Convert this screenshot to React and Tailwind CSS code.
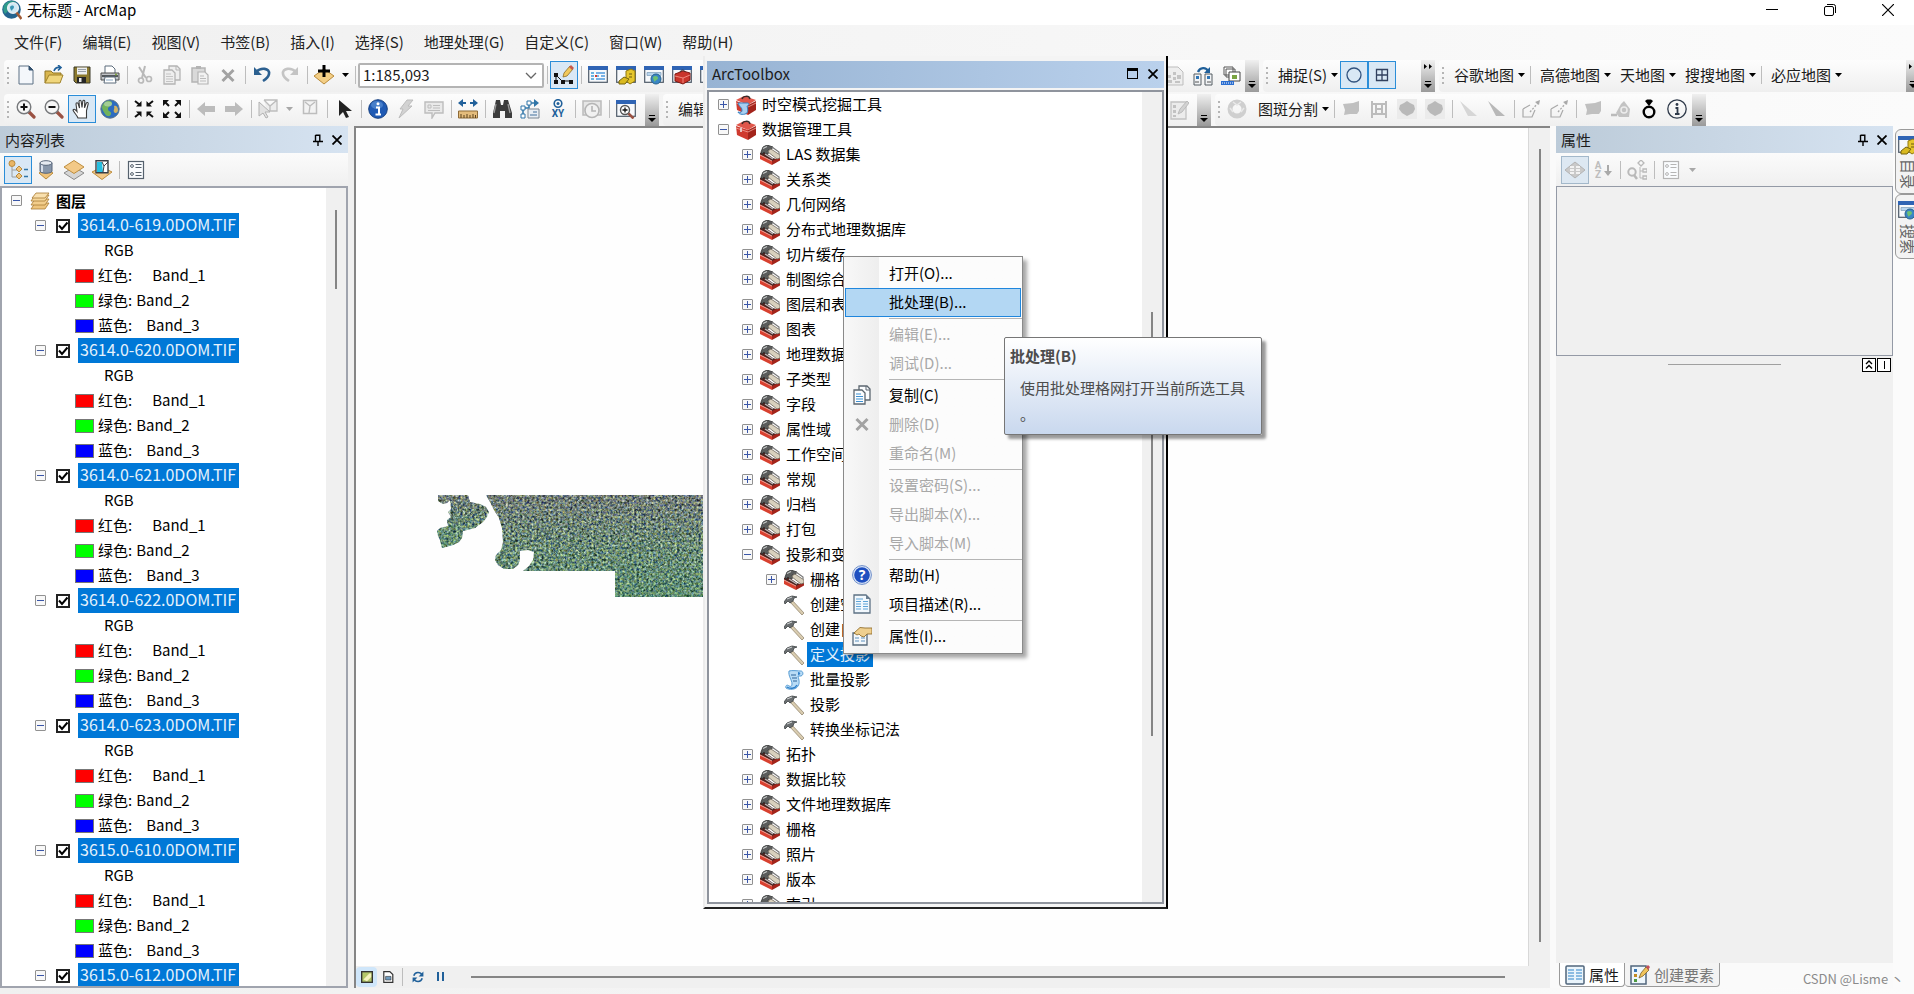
import React from "react";

/* ---------- icons ---------- */
const S = ({ children, className = "size-5" }) => (
  <svg viewBox="0 0 20 20" className={`${className} shrink-0`} fill="none" aria-hidden="true">{children}</svg>
);

const NewDoc = () => (
  <S><path d="M3 1h10l4 4v14H3z" fill="#f4f7fb" stroke="#5d7184" /><path d="M13 1v4h4z" fill="#33506e" stroke="#33506e" /></S>
);
const OpenIcon = () => (
  <S>
    <path d="M1 18V6h6l2 2h8v3" fill="#d9b64f" stroke="#8f7423" />
    <path d="M1 18l4-8h14l-3 8z" fill="#f0d67c" stroke="#a08228" />
    <path d="M10 6c1-3 3-4 6-3.500M14 0l3 2.500-3 3" stroke="#20609a" strokeWidth="1.600" />
  </S>
);
const SaveIcon = () => (
  <S>
    <path d="M2 2h16v16H4l-2-2z" fill="#8c7a2e" stroke="#3d3a28" />
    <rect x="5" y="2.500" width="10" height="7" fill="#eceef0" /><path d="M6 4.500h8M6 6.500h8" stroke="#9aa1a8" />
    <rect x="5" y="12" width="9" height="6" fill="#262626" /><rect x="7" y="13" width="2.500" height="4" fill="#e8e8e8" />
  </S>
);
const PrintIcon = () => (
  <S>
    <path d="M5 8V1h7l3 3v4" fill="#fff" stroke="#5d6d7c" />
    <path d="M1 8h18v7H1z" fill="#c2c5c9" stroke="#4c4c4c" /><path d="M2 11h16" stroke="#54585c" strokeWidth="2" />
    <path d="M5 12h10l1 6H4z" fill="#fff" stroke="#5d6d7c" /><path d="M6 15h7" stroke="#8aaac6" /><circle cx="16" cy="9.500" r="1" fill="#7da33c" />
  </S>
);
const CutIcon = () => (
  <S><path d="M5 2l7 11M11 1L8 13" stroke="#b9b9b9" strokeWidth="2" /><circle cx="7" cy="15.500" r="2.500" stroke="#b9b9b9" strokeWidth="1.700" /><circle cx="15" cy="14" r="2.500" stroke="#b9b9b9" strokeWidth="1.700" /></S>
);
const CopyShape = ({ line = "#b4b4b4", text = "#c4c4c4", page = "#eeeeee" }) => (
  <S>
    <path d="M7 1h8l3 3v11H7z" fill={page} stroke={line} strokeWidth="1.300" /><path d="M14 1v4h4" stroke={line} />
    <path d="M2 5h8l3 3v11H2z" fill={page} stroke={line} strokeWidth="1.300" />
    <path d="M4 9h5M4 11.500h7M4 14h7M4 16.500h7" stroke={text} strokeWidth="1.200" />
  </S>
);
const PasteIcon = () => (
  <S>
    <path d="M2 3h13v14H2z" fill="#d9d9d9" stroke="#b4b4b4" strokeWidth="1.500" /><path d="M6 1h5v3H6z" fill="#b4b4b4" />
    <path d="M8 7h7l3 3v9H8z" fill="#f2f2f2" stroke="#b4b4b4" strokeWidth="1.200" /><path d="M10 11h4M10 13.500h6M10 16h6" stroke="#bbb" />
  </S>
);
const XGray = () => <S><path d="M4.500 5l11 11M15.500 5l-11 11" stroke="#a2a2a2" strokeWidth="3" /></S>;
const UndoIcon = () => (
  <S><path d="M4 7c5-5 14-4 13 2-.500 3-3 5-6 7" stroke="#2c6090" strokeWidth="2.600" /><path d="M2 2v8h8z" fill="#2c6090" /></S>
);
const RedoIcon = () => (
  <S><path d="M16 7C11 2 2 3 3 9c.500 3 3 5 6 7" stroke="#c4c4c4" strokeWidth="2.600" /><path d="M18 2v8h-8z" fill="#c4c4c4" /></S>
);
const AddData = () => (
  <S><path d="M0 11l10-7 10 7-10 8z" fill="#f3ce85" stroke="#b98a3a" /><path d="M10 0v12M4 6h12" stroke="#000" strokeWidth="3" /></S>
);
const EditorIcon = () => (
  <S>
    <path d="M2 10l6 6h8M2 10v6" stroke="#111" /><path d="M0 8h4v4H0zM0 15h4v4H0zM7 15h4v4H7zM15 15h4v4h-4z" fill="#111" />
    <path d="M9 12l1-4 6-7 3 3-6 7z" fill="#f2c95c" stroke="#8a6b24" strokeWidth=".800" /><path d="M15 2l2-2 3 3-2 2z" fill="#c85a4a" />
  </S>
);
const Win = ({ children }) => (
  <S><rect x=".700" y="1.700" width="18.600" height="15.600" fill="#f7f9fc" stroke="#4e5a68" strokeWidth="1.200" /><path d="M0 1h20v4H0z" fill="#2f64b4" />{children}</S>
);
const TableWin = () => (
  <Win><path d="M3 8h3M3 11h3M3 14h3" stroke="#3e9bd6" strokeWidth="1.500" /><path d="M8 8h9M8 11h3M13 11h4M8 14h9" stroke="#4f9bdd" strokeWidth="1.500" /><path d="M7 10h2v2H7z" fill="#d23b30" /></Win>
);
const CatalogWin = () => (
  <Win><path d="M10 6l5-2 4 2v10l-5 3-4-3z" fill="#e6c62c" stroke="#8f7711" /><path d="M3 16l5-4 5 2-4 5H3z" fill="#d9b91f" stroke="#77650e" /><path d="M13 9h3M13 12h3" stroke="#6b5a10" /></Win>
);
const SearchWin = () => (
  <Win><path d="M3 7.500h14v3H3z" fill="#b8d5ee" stroke="#7d9cb8" strokeWidth=".700" /><circle cx="12" cy="14" r="5" fill="#3a86c4" stroke="#26628f" /><path d="M9 12c2-2 5-1 5 1s-3 2-3 4c-1-1-2-3-2-5z" fill="#6ec172" /></Win>
);
const ToolWin = () => (
  <Win><path d="M3 9l8-3 7 2v7l-7 4-8-3z" fill="#c9352b" stroke="#7e1912" /><path d="M3 11l8 2 7-3M11 13v5" stroke="#f08a7e" /><path d="M8 7c1-3 5-2 5 0" stroke="#333" /></Win>
);
const GrayGrid = () => <S><path d="M1 1h12l5 5v13H1z" fill="#eee" stroke="#bdbdbd" /><path d="M3 9h3v3H3zM8 6h3v3H8zM8 11h3v3H8zM12 9h4v4h-4zM3 14h4v3H3zM10 15h5v2h-5z" fill="#c4c4c4" /></S>;
const ServerSwap = () => (
  <S>
    <path d="M1 8h7v11H1zM12 8h7v11h-7z" fill="#f1f3f5" stroke="#555c63" /><path d="M3 10h3v3H3zM14 10h3v3h-3z" fill="#2f75b5" /><path d="M2 16h4M14 16h4" stroke="#555" />
    <path d="M5 6c2-5 8-5 10-1" stroke="#20609a" strokeWidth="2.400" /><path d="M17 1v6h-6z" fill="#20609a" />
  </S>
);
const LayersStack = () => (
  <S>
    <path d="M3 1h9v8H3zM5 3h9v8H5z" fill="#fff" stroke="#555" /><path d="M8 6h11v9H8z" fill="#fff" stroke="#444" /><path d="M11 9h5v4h-5z" fill="#7aa442" />
    <path d="M0 15h13v4H0z" fill="#2c6fd1" /><path d="M1 17h11" stroke="#fff" strokeDasharray="1 1" />
  </S>
);
const SnapCircle = () => <S><circle cx="10" cy="10" r="7" stroke="#31527e" strokeWidth="1.300" /></S>;
const SnapGrid = () => <S><path d="M4.500 4.500h11v11h-11zM10 4.500v11M4.500 10h11" stroke="#31405e" strokeWidth="1.300" /></S>;

const Mag = ({ minus }) => (
  <S>
    <path d="M13 13l5 5" stroke="#9a5142" strokeWidth="3.200" strokeLinecap="round" />
    <circle cx="8" cy="8" r="6.800" fill="#f6f6f6" stroke="#77797c" strokeWidth="1.400" /><path d="M4.500 8h7" stroke="#111" strokeWidth="2" />
    {!minus && <path d="M8 4.500v7" stroke="#111" strokeWidth="2" />}
  </S>
);
const Hand = () => (
  <S>
    <path d="M6 19c-1-3-4-5-5-8 1-1.500 2.500-.500 4 1.500L4 5c0-1.600 1.800-1.800 2.200-.200L7.500 9 7 2.500C7.200.900 9 .900 9.200 2.500L10 8.500l.800-6.300c.400-1.500 2-1.200 2 .300l-.300 6.300 1.700-4.600c.700-1.300 2.300-.700 2 .700l-1.700 6.600V19z" fill="#fff" stroke="#3c3c3c" strokeWidth="1.100" />
  </S>
);
const Globe = ({ className }) => (
  <S className={className}>
    <circle cx="10" cy="10" r="9.200" fill="#2c6cc0" stroke="#5e7687" /><path d="M4 4c4-4 9-2 8 1s-4 2-4 5 4 2 3 5-4 3-6 0-5-7-1-11z" fill="#72b25c" />
    <path d="M14 7c2-1 4 1 4 4s-3 4-4 2 1-3 0-6z" fill="#d2b465" /><ellipse cx="8" cy="5" rx="4" ry="2.500" fill="#fff" opacity=".35" />
  </S>
);
const ArrowsIn = () => (
  <S><path d="M1 2l5 4M19 2l-5 4M1 18l5-4M19 18l-5-4" stroke="#111" strokeWidth="2" /><path d="M7.500 2v5.500H2zM12.500 2v5.500H18zM7.500 18v-5.500H2zM12.500 18v-5.500H18z" fill="#111" /></S>
);
const ArrowsOut = () => (
  <S><path d="M2 2l5 5M18 2l-5 5M2 18l5-5M18 18l-5-5" stroke="#111" strokeWidth="2" /><path d="M1 7V1h6zM19 7V1h-6zM1 13v6h6zM19 13v6h-6z" fill="#111" /></S>
);
const NavArrow = ({ right }) => (
  <S><path d={right ? "M19 10l-8-7v4H1v6h10v4z" : "M1 10l8-7v4h10v6H9v4z"} fill="#bcbcbc" /></S>
);
const SelectFeat = () => <S><path d="M6 1h13v11H9M6 1l6 6 7-6M12 7v5" fill="#ededed" stroke="#bdbdbd" strokeWidth="1.300" /><path d="M1 3v14l4-3 3 5 2-1-3-5h5z" fill="#e2e2e2" stroke="#b2b2b2" /></S>;
const ClearSel = () => <S><rect x="3.500" y="1.500" width="13" height="13" fill="#f3f3f3" stroke="#bdbdbd" strokeWidth="1.500" /><path d="M5 3l5 4-1 7M10 7l5-4" stroke="#bdbdbd" strokeWidth="1.400" /></S>;
const Pointer = () => <S><path d="M5 1v16l4-4 3 6 3-1-3-6h6z" fill="#222" /></S>;
const Identify = () => (
  <S><circle cx="10" cy="10" r="9.300" fill="#1f5ab4" stroke="#174080" /><ellipse cx="9" cy="6" rx="6" ry="4" fill="#6ea2e0" opacity=".5" /><circle cx="10" cy="4.800" r="1.500" fill="#fff" /><path d="M8 8.500h3v7M7.500 15.500h5.500" stroke="#fff" strokeWidth="2" /></S>
);
const Bolt = () => <S><path d="M11 1h6l-5 6h4L3 19l4-9H4z" fill="#d2d2d2" stroke="#bcbcbc" /></S>;
const Popup = () => <S><path d="M1 3h18v11h-8l-3 5v-5H1z" fill="#e9e9e9" stroke="#bdbdbd" strokeWidth="1.400" /><path d="M4 6h3v3H4zM9 6.500h7M9 9h7M4 11.500h12" stroke="#bdbdbd" /></S>;
const Measure = () => (
  <S><path d="M0 4l5-4v8zM20 4l-5-4v8z" fill="#20609a" /><path d="M3 4h5M12 4h5" stroke="#20609a" strokeWidth="2" /><path d="M.500 12h19v7H.500z" fill="#e4bc7c" stroke="#8d6a37" /><path d="M3 19v-4M6 19v-3M9 19v-4M12 19v-3M15 19v-4M17.500 19v-3" stroke="#5d431d" /></S>
);
const Binoculars = () => (
  <S><path d="M4 1h4l1 5h2l1-5h4l4 13v5h-7v-7h-5v7H1v-5z" fill="#3c3c3c" /><path d="M4 5L2 14M16 5l2 9" stroke="#9a9a9a" strokeWidth="1.300" /></S>
);
const RouteFind = () => (
  <S><path d="M3 16V9h6V4h6" stroke="#2f75a8" strokeWidth="1.500" /><path d="M14 0l5 4-5 4z" fill="#2f75a8" /><path d="M1 7h4v4H1zM1 15h4v4H1zM7 2h4v4H7z" fill="#fff" stroke="#2f75a8" /><path d="M8 10h11v9H8z" fill="#e8eef4" stroke="#7a8793" /><path d="M13 13h4M10 16h7" stroke="#7a9bb9" strokeWidth="1.300" /></S>
);
const GoXY = () => (
  <S><circle cx="10" cy="4.500" r="3.800" stroke="#20609a" strokeWidth="1.600" /><circle cx="10" cy="4.500" r="1.500" fill="#20609a" /><text x="10" y="18" textAnchor="middle" fontSize="10" fontWeight="700" fill="#20609a" fontFamily="Roboto, sans-serif">XY</text></S>
);
const TimeIcon = () => <S><path d="M1 2h18v14H1z" fill="#e6e6e6" stroke="#bbb" strokeWidth="1.500" /><circle cx="10" cy="11.500" r="7" fill="#f1f1f1" stroke="#b5b5b5" strokeWidth="1.600" /><path d="M10 7v5h4" stroke="#b5b5b5" strokeWidth="1.600" /></S>;
const ViewerWin = () => <Win><circle cx="9" cy="11" r="4.500" fill="#fff" stroke="#555" strokeWidth="1.400" /><path d="M6.500 11h5M9 8.500v5" stroke="#111" strokeWidth="1.300" /><path d="M12.500 14.500l5 5" stroke="#9a5142" strokeWidth="2.500" /></Win>;
const FormEdit = () => <S><path d="M2 2h15v17H2z" fill="#ececec" stroke="#c2c2c2" strokeWidth="1.300" /><path d="M4 5h3v3H4zM4 10h3v3H4zM4 15h3v2H4z" fill="#c2c2c2" /><path d="M9 14l2-5 7-8 2 2-7 9z" fill="#d2d2d2" stroke="#bbb" /></S>;
const Ring = () => <S><circle cx="10" cy="10" r="7" stroke="#cfcfcf" strokeWidth="5" /><path d="M6 3l4 3 4-3M17 9l-3 4M3 9l3 4" stroke="#e9e9e9" strokeWidth="1.500" /></S>;
const GrayBlob = () => <S><path d="M2 5l10-1 6-2v10l-2 3-7 0-6 1 1-5z" fill="#c0c0c0" /></S>;
const Frame = () => <S><path d="M3 2v17M17 2v17M3 5h14M3 15h14M7 6v9M13 6v9M7 10h6" stroke="#bcbcbc" strokeWidth="2" /></S>;
const Octagon = () => <S><path d="M0 0h20v20H0z" fill="#ebebeb" /><path d="M7 4l3-2 3 2 4 2 1 4-2 4-6 3-5-3-3-4 1-4z" fill="#b9b9b9" /></S>;
const Tri = ({ dark }) => <S><path d="M1 2l17 15H9z" fill={dark ? "#b8b8b8" : "#d6d6d6"} /></S>;
const PenPoly = () => <S><path d="M2 10l7-4M2 10v8h9l3-7" stroke="#a9a9a9" strokeWidth="1.200" /><path d="M9 13l8-9" stroke="#a9a9a9" strokeDasharray="2 1.500" strokeWidth="1.300" /><path d="M19 1l-1 5-4-3z" fill="#a9a9a9" /></S>;
const Rotate = () => <S><path d="M0 16h6" stroke="#bbb" strokeWidth="2.500" /><path d="M13 2l6 8-1 8H8l-3-4 5-9z" fill="#c3c3c3" /><circle cx="13" cy="11" r="3" stroke="#ececec" strokeWidth="1.500" /></S>;
const DiamondRing = () => <S><circle cx="10" cy="13" r="5.300" stroke="#000" strokeWidth="2.400" /><path d="M6 2l2-1.500h4L14 2l-4 5z" fill="#000" /></S>;
const InfoRing = () => <S><circle cx="10" cy="10" r="9.200" stroke="#2f3a4a" strokeWidth="1.300" /><circle cx="10" cy="5.500" r="1.400" fill="#2f3a4a" /><path d="M8.500 9h2v6M8 15h4.500" stroke="#2f3a4a" strokeWidth="1.800" /></S>;

/* contents panel */
const ListOrder = () => (
  <S><path d="M4 7v10h5M4 10h7" stroke="#9c9c9c" /><circle cx="4" cy="3.500" r="3" fill="#e9b666" stroke="#b98a3a" /><path d="M8 9l3-3 3 3-3 3zM8 16l3-3 3 3-3 3z" fill="#f0c37a" stroke="#b98a3a" /><path d="M16 9.500h4M16 16.500h4" stroke="#2f75a8" strokeWidth="1.500" /></S>
);
const ListSource = () => (
  <S><path d="M3 13l7-4 7 4-7 6z" fill="#f0c37a" stroke="#b98a3a" /><path d="M4 3v8c0 3 12 3 12 0V3z" fill="#8796aa" stroke="#56657a" /><path d="M6 4v8" stroke="#d6deea" strokeWidth="2" /><ellipse cx="10" cy="3" rx="6" ry="2.300" fill="#e5eaf1" stroke="#56657a" /></S>
);
const ListVisible = () => <S><path d="M0 13l10-6 10 6-10 6.500z" fill="#d5d5d5" stroke="#8b8b8b" /><path d="M0 7l10-6.500L20 7l-10 6.500z" fill="#f3c987" stroke="#bd8d3d" /></S>;
const ListSelect = () => <S><path d="M0 12l10-5 10 5-10 7.500z" fill="#f3c987" stroke="#bd8d3d" /><path d="M4 .700h12v12H4z" fill="#fff" stroke="#3a3f46" strokeWidth="1.400" /><path d="M5 2h5l1 10H5z" fill="#27bfe0" /><path d="M10 2l2 4 4-4M12 6l-1 6" stroke="#3a3f46" /></S>;
const Options = ({ c = "#55616d" }) => (
  <S><rect x="2.500" y="1.500" width="15" height="17" fill="#fafcfe" stroke={c} strokeWidth="1.200" /><circle cx="6" cy="6" r="1.400" stroke={c} /><circle cx="6" cy="14" r="1.400" stroke={c} /><path d="M9.500 4.500h6M9.500 7.500h6M9.500 12.500h6M9.500 15.500h6" stroke={c} /></S>
);
const LayerStack = () => (
  <S><path d="M1 18l4-6h14l-4 6z" fill="#eec57e" stroke="#a87b36" strokeWidth=".800" /><path d="M1 14l4-6h14l-4 6z" fill="#f2cd8c" stroke="#a87b36" strokeWidth=".800" /><path d="M1 10l4-6h14l-4 6z" fill="#f6d79b" stroke="#a87b36" strokeWidth=".800" /><path d="M2 7l4-5h13l-4 5z" fill="#f9e0ae" stroke="#a87b36" strokeWidth=".800" /></S>
);

/* toolbox tree */
const Toolbox = ({ script }) => (
  <S>
    <path d="M0 6l12 4v10L1 15z" fill="#cf3a2f" /><path d="M12 10l8-4v9l-8 5z" fill="#a3241b" /><path d="M0 5l8-4 12 4-8 5z" fill="#e0564a" />
    <path d="M6 4c1-3 7-4 8 0" stroke="#3a2a28" strokeWidth="1.500" /><path d="M0 8l12 4 8-4" stroke="#f2a59c" strokeWidth=".800" /><path d="M5 8v4M6 10" stroke="#eee" strokeWidth="1.500" />
    {script && <path d="M2 8h10c2 1 0 3-1 3 1 3 1 5 0 7-2 2-8 2-9-1 3 1 4 0 4-2 0-3-3-3-4-7z" fill="#a8cff0" stroke="#3a83c2" />}
  </S>
);
const Toolset = () => (
  <S>
    <path d="M0 8l3-2 10 7 6 2-6 4L0 12z" fill="#4a2320" />
    <path d="M0 9.500l12 6.500v4L0 14z" fill="#d8402f" /><path d="M12 16l8-4v3.500L12 20z" fill="#a3241b" /><path d="M0 10l12 6" stroke="#f3b0a6" strokeWidth=".900" />
    <path d="M1 7l2-5 4-2 6 2-2 3-3 0 1 3-3 1-2-2-2 2z" fill="#5a5c5c" stroke="#303232" strokeWidth=".800" />
    <path d="M3 3.500l4-2" stroke="#c9cccc" strokeWidth="1.200" /><path d="M9 5l2-1 9 6v3l-3 1-9-7z" fill="#d9d1be" stroke="#6e675a" strokeWidth=".800" />
    <path d="M5 9l8 5" stroke="#bababa" strokeWidth="1.400" /><path d="M12 2l7 5v2" stroke="#777" strokeWidth="1.200" />
  </S>
);
const Hammer = () => (
  <S>
    <path d="M8 5l12 13-2 2L6 7z" fill="#d9ccb0" stroke="#8a7d64" strokeWidth=".700" />
    <path d="M0 7l3-4 5-2 5 1-3 1-1 3-3 2-2-2-3 3z" fill="#6a6e70" stroke="#3d4244" strokeWidth=".800" /><path d="M3 4l5-2" stroke="#d3d6d8" />
  </S>
);
const ScriptIcon = () => (
  <S>
    <path d="M5 1c3-1 9 0 12 0 2 0 3 4 0 5h-3c1 4 2 7 0 10-2 4-9 4-12 2-1-2 1-4 3-2 2 1 3 0 3-2 0-4-4-8-3-13z" fill="#b9dcf6" stroke="#4a94cf" strokeWidth=".900" />
    <path d="M7 5h5M8 8h5M9 11h4" stroke="#2d659a" /><path d="M14 2c3 0 3 3 0 3" fill="#2d7fca" /><path d="M3 17c3 2 8 2 10-2" stroke="#2d7fca" strokeWidth="1.500" />
  </S>
);
const HelpIcon = () => (
  <S><circle cx="10" cy="10" r="9.400" fill="#dfe8f7" stroke="#6a8bc8" /><circle cx="10" cy="10" r="7.800" fill="#1e4fc0" /><text x="10" y="15" textAnchor="middle" fontSize="14" fontWeight="700" fill="#fff" fontFamily="Open Sans, sans-serif">?</text></S>
);
const DocIcon = () => <S><path d="M2 1h12l4 4v14H2z" fill="#f2f8fd" stroke="#5d7184" strokeWidth="1.300" /><path d="M14 1v4h4z" fill="#6b7f92" /><path d="M4 5h7M4 7.500h5M4 10h5M4 12.500h5M4 15h5M11 7.500h5M11 10h5M11 12.500h5M11 15h5" stroke="#5ea4d8" /></S>;
const PropHand = () => <S><path d="M1 7h14v12H1z" fill="#f4f8fb" stroke="#56697b" strokeWidth="1.300" /><path d="M3 12h4M9 12h4M3 15h4M9 15h4" stroke="#8fb2d2" strokeWidth="1.500" /><path d="M2 7l6-5.500 5 .5h7v6h-5l-3 3-3-1-2-2-2 1z" fill="#efcf8e" stroke="#93702f" strokeWidth=".900" /></S>;
const ArcMapLogo = () => (
  <S>
    <circle cx="9.500" cy="9.500" r="9.300" fill="#23638f" /><path d="M2 5c3-4 8-5 12-3L9 8l-6 6C1 11 1 8 2 5z" fill="#2f9a8b" /><circle cx="11" cy="8" r="5.300" fill="#cfe8f5" stroke="#e8eef2" strokeWidth="1.600" />
    <path d="M8 7c1-2 4-2 4 0s-2 2-2 4c-1-1-2-2-2-4z" fill="#3b95b4" /><path d="M14.500 12.500l5 6.500" stroke="#a05a35" strokeWidth="2.600" />
  </S>
);
const CategoryIcon = () => <S><path d="M0 10l10-8 10 8-10 8z" fill="#c9c9c9" stroke="#b2b2b2" /><path d="M5 7h4M5 10h4M5 13h4M11 7h4M11 10h4M11 13h4" stroke="#fff" strokeWidth="1.400" /></S>;
const SortAZ = () => <S><text x="5" y="9" textAnchor="middle" fontSize="10" fontWeight="700" fill="#bdbdbd" fontFamily="Roboto, sans-serif">A</text><text x="5" y="18" textAnchor="middle" fontSize="10" fontWeight="700" fill="#bdbdbd" fontFamily="Roboto, sans-serif">Z</text><path d="M15 5v9" stroke="#a9a9a9" strokeWidth="2" /><path d="M11 11h8l-4 5z" fill="#a9a9a9" /></S>;
const RelateIcon = () => <S><circle cx="5" cy="12" r="3.700" stroke="#b9b9b9" strokeWidth="2" /><path d="M7 15l3 4" stroke="#b9b9b9" strokeWidth="2.500" /><path d="M11 3l3-3 3 3-3 3zM16 9h4v3h-4zM16 16h4v3h-4z" stroke="#b9b9b9" strokeWidth="1.300" /><path d="M13 7v11h3M13 11h3" stroke="#b9b9b9" /></S>;
const TabTable = () => <S><rect x="1" y="1" width="18" height="18" rx="1" fill="#eaf4fb" stroke="#50667c" strokeWidth="1.500" /><path d="M3 5h6M3 8h6M3 11h6M3 14h6M11 5h6M11 8h6M11 11h6M11 14h6" stroke="#8cbce2" strokeWidth="2" /></S>;
const TabEdit = () => <S><rect x="1" y="1" width="15" height="18" fill="#eef6fc" stroke="#50667c" strokeWidth="1.500" /><path d="M4 4h3v3H4z" fill="#3a78b5" /><path d="M4 9h3v3H4z" fill="#c38b22" /><path d="M4 14h3v3H4z" fill="#4d9a3f" /><path d="M9 13l2-5 5-6 3 3-6 6z" fill="#f0c35a" stroke="#7e6224" strokeWidth=".800" /><path d="M16 2l2-2 2 2-2 3z" fill="#c34f5a" /></S>;

/* ---------- small building blocks ---------- */
const Caret = ({ gray }) => (
  <svg viewBox="0 0 7 4" className="h-1 w-[7px] shrink-0" aria-hidden="true"><path d="M0 0h7L3.500 4z" fill={gray ? "#a8a8a8" : "#000"} /></svg>
);
const Btn = ({ label, icon, on, disabled }) => (
  <button type="button" aria-label={label} disabled={disabled}
    className={`flex h-7 w-7 shrink-0 items-center justify-center ${on ? "border border-[#2a8dd8] bg-[#d9e8f5]" : ""}`}>{icon}</button>
);
const Sep = () => <span className="ml-[3px] mr-[2px] h-[18px] w-px shrink-0 bg-[#bdbdbd]" />;
const Grip = () => (
  <span className="flex w-2 shrink-0 flex-col items-center gap-[3px]">
    {[0, 1, 2, 3].map((i) => <i key={i} className="size-[2px] bg-[#b5b5b5]" />)}
  </span>
);
const Overflow = ({ more }) => (
  <button type="button" aria-label="更多" className="ml-auto flex h-8 w-[14px] shrink-0 flex-col items-center justify-between self-start bg-linear-to-b from-[#f0f0f0] to-[#9a9a9a] pt-1 pb-[3px]">
    <svg viewBox="0 0 8 5" className="h-[5px] w-2" aria-hidden="true">{more && <path d="M0 0l3 2.500L0 5zM5 0l3 2.500L5 5z" fill="#000" />}</svg>
    <svg viewBox="0 0 8 8" className="size-2" aria-hidden="true"><path d="M1 .500h6" stroke="#000" /><path d="M0 3h8L4 7z" fill="#000" /></svg>
  </button>
);
const Bar = ({ className = "", children }) => (
  <div className={`flex h-8 shrink-0 items-center rounded-l bg-linear-to-b from-[#fdfdfd] to-[#efefef] pb-[2px] ${className}`}>{children}</div>
);
const TextBtn = ({ children }) => (
  <button type="button" className="flex h-7 shrink-0 items-center gap-1 whitespace-nowrap pr-[2px] pl-[7px]">{children}<Caret /></button>
);
const Expander = ({ open }) => (
  <button type="button" aria-label={open ? "折叠" : "展开"} className="flex size-[11px] shrink-0 items-center justify-center rounded-[1px] border border-[#919191] bg-[#f8f8f8]">
    <svg viewBox="0 0 7 7" className="size-[7px]" aria-hidden="true"><path d={open ? "M0 3.500h7" : "M0 3.500h7M3.500 0v7"} stroke="#3a56a8" /></svg>
  </button>
);
const PinIcon = () => <svg viewBox="0 0 10 12" className="h-3 w-[10px]" fill="none" aria-hidden="true"><path d="M2.500 1v6M2.500 1.200h5M6.800 1v6M0 7.500h10M5 8v4" stroke="#000" strokeWidth="1.400" /></svg>;
const CloseX = () => <svg viewBox="0 0 10 10" className="size-[10px]" fill="none" aria-hidden="true"><path d="M.500.500l9 9M9.500.500l-9 9" stroke="#000" strokeWidth="1.800" /></svg>;
const PanelHead = ({ title }) => (
  <header className="flex h-[27px] shrink-0 items-center bg-linear-to-r from-[#bccbd9] to-[#d6e3f1] pl-[5px] pr-[6px] text-[#1c1c1c]">
    <h2>{title}</h2>
    <button type="button" aria-label="自动隐藏" className="ml-auto mr-[9px]"><PinIcon /></button>
    <button type="button" aria-label="关闭"><CloseX /></button>
  </header>
);

/* ---------- data ---------- */
const menus = ["文件(F)", "编辑(E)", "视图(V)", "书签(B)", "插入(I)", "选择(S)", "地理处理(G)", "自定义(C)", "窗口(W)", "帮助(H)"];
const layers = ["3614.0-619.0DOM.TIF", "3614.0-620.0DOM.TIF", "3614.0-621.0DOM.TIF", "3614.0-622.0DOM.TIF", "3614.0-623.0DOM.TIF", "3615.0-610.0DOM.TIF", "3615.0-612.0DOM.TIF"];
const bands = [
  ["红色:", "Band_1", "bg-[#ff0000]", "ml-5"],
  ["绿色:", "Band_2", "bg-[#00ff00]", "ml-1"],
  ["蓝色:", "Band_3", "bg-[#0000ff]", "ml-[14px]"],
];
const tree = [
  [0, "boxScript", "时空模式挖掘工具"], [0, "box", "数据管理工具", true],
  [1, "set", "LAS 数据集"], [1, "set", "关系类"], [1, "set", "几何网络"], [1, "set", "分布式地理数据库"], [1, "set", "切片缓存"],
  [1, "set", "制图综合"], [1, "set", "图层和表视图"], [1, "set", "图表"], [1, "set", "地理数据库管理"], [1, "set", "子类型"], [1, "set", "字段"],
  [1, "set", "属性域"], [1, "set", "工作空间"], [1, "set", "常规"], [1, "set", "归档"], [1, "set", "打包"], [1, "set", "投影和变换", true],
  [2, "set", "栅格"], [2, "hammer", "创建空间参考"], [2, "hammer", "创建自定义地理变换"], [2, "hammer", "定义投影", false, true],
  [2, "script", "批量投影"], [2, "hammer", "投影"], [2, "hammer", "转换坐标记法"],
  [1, "set", "拓扑"], [1, "set", "数据比较"], [1, "set", "文件地理数据库"], [1, "set", "栅格"], [1, "set", "照片"], [1, "set", "版本"], [1, "set", "索引"],
];
const treeIcons = { boxScript: <Toolbox script />, box: <Toolbox />, set: <Toolset />, hammer: <Hammer />, script: <ScriptIcon /> };
const indent = ["pl-[9px]", "pl-[33px]", "pl-[57px]"];
const menuGroups = [
  [["打开(O)..."], ["批处理(B)...", null, false, true]],
  [["编辑(E)...", null, true], ["调试(D)...", null, true]],
  [["复制(C)", <CopyShape line="#5c6770" text="#3d8fd0" page="#fbfdff" />], ["删除(D)", <XGray />, true], ["重命名(M)", null, true]],
  [["设置密码(S)...", null, true], ["导出脚本(X)...", null, true], ["导入脚本(M)", null, true]],
  [["帮助(H)", <HelpIcon />], ["项目描述(R)...", <DocIcon />]],
  [["属性(I)...", <PropHand />]],
];

/* ---------- regions ---------- */
function TitleBar() {
  return (
    <header className="flex h-[25px] shrink-0 items-start bg-white pl-[2px] text-black">
      <ArcMapLogo />
      <h1 className="ml-[5px] text-[15px] leading-5">无标题 - ArcMap</h1>
      <div className="ml-auto flex h-5 items-center gap-[46px] pr-[20px]">
        <button type="button" aria-label="最小化"><svg viewBox="0 0 12 12" className="size-3"><path d="M0 5.500h12" stroke="#000" /></svg></button>
        <button type="button" aria-label="还原"><svg viewBox="0 0 12 12" className="size-3" fill="none"><rect x=".500" y="2.500" width="9" height="9" rx="1.500" stroke="#000" /><path d="M3 .500h6.500a2 2 0 0 1 2 2V9" stroke="#000" /></svg></button>
        <button type="button" aria-label="关闭"><svg viewBox="0 0 12 12" className="size-3" fill="none"><path d="M0 0l12 12M12 0L0 12" stroke="#000" strokeWidth="1.200" /></svg></button>
      </div>
    </header>
  );
}

function Toolbars() {
  return (
    <div className="flex shrink-0 flex-col gap-[2px] pl-1">
      <div className="flex gap-1 overflow-hidden">
        <Bar className="w-[1255px]">
          <Grip />
          <Btn label="新建" icon={<NewDoc />} /><Btn label="打开" icon={<OpenIcon />} /><Btn label="保存" icon={<SaveIcon />} /><Btn label="打印" icon={<PrintIcon />} />
          <Sep />
          <Btn label="剪切" icon={<CutIcon />} disabled /><Btn label="复制" icon={<CopyShape />} disabled /><Btn label="粘贴" icon={<PasteIcon />} disabled /><Btn label="删除" icon={<XGray />} disabled />
          <Sep />
          <Btn label="撤消" icon={<UndoIcon />} /><Btn label="恢复" icon={<RedoIcon />} disabled />
          <Sep />
          <Btn label="添加数据" icon={<AddData />} /><button type="button" aria-label="添加数据选项" className="flex w-[14px] shrink-0 justify-center"><Caret /></button>
          <Sep />
          <label className="relative flex h-[25px] w-[186px] shrink-0 items-center rounded-[2px] border-2 border-[#b4b4b4] bg-white">
            <select aria-label="地图比例" className="h-full w-full appearance-none bg-transparent pl-[3px] leading-5 outline-none"><option>1:185,093</option></select>
            <svg viewBox="0 0 12 7" className="pointer-events-none absolute right-[5px] h-[7px] w-3" fill="none" aria-hidden="true"><path d="M1 1l5 5 5-5" stroke="#666" strokeWidth="1.300" /></svg>
          </label>
          <Sep />
          <Btn label="编辑器工具条" icon={<EditorIcon />} on />
          <Sep />
          <Btn label="内容列表" icon={<TableWin />} /><Btn label="目录" icon={<CatalogWin />} /><Btn label="搜索" icon={<SearchWin />} /><Btn label="工具箱" icon={<ToolWin />} /><Btn label="Python" icon={<TableWin />} />
          <div className="ml-auto flex h-8 items-center self-start">
            <Btn label="格网" icon={<GrayGrid />} disabled /><Btn label="同步" icon={<ServerSwap />} /><Btn label="图层" icon={<LayersStack />} />
            <Overflow />
          </div>
        </Bar>
        <Bar className="w-[172px]">
          <Grip /><TextBtn>捕捉(S)</TextBtn>
          <Btn label="点捕捉" icon={<SnapCircle />} on /><Btn label="端点捕捉" icon={<SnapGrid />} on />
          <Overflow more />
        </Bar>
        <Bar className="min-w-0 flex-1 overflow-hidden">
          <Grip />
          <TextBtn>谷歌地图</TextBtn><Sep /><TextBtn>高德地图</TextBtn><TextBtn>天地图</TextBtn><TextBtn>搜搜地图</TextBtn><Sep /><TextBtn>必应地图</TextBtn>
          <div className="-mr-[6px] ml-auto self-start"><Overflow more /></div>
        </Bar>
      </div>
      <div className="flex gap-1 overflow-hidden">
        <Bar className="w-[655px]">
          <Grip />
          <Btn label="放大" icon={<Mag />} /><Btn label="缩小" icon={<Mag minus />} /><Btn label="平移" icon={<Hand />} on /><Btn label="全图" icon={<Globe />} />
          <Sep />
          <Btn label="固定比例放大" icon={<ArrowsIn />} /><Btn label="固定比例缩小" icon={<ArrowsOut />} />
          <Sep />
          <Btn label="返回" icon={<NavArrow />} disabled /><Btn label="前进" icon={<NavArrow right />} disabled />
          <Sep />
          <Btn label="选择要素" icon={<SelectFeat />} disabled /><button type="button" aria-label="选择方式" disabled className="flex w-[14px] shrink-0 justify-center"><Caret gray /></button><Btn label="清除选择" icon={<ClearSel />} disabled />
          <Sep />
          <Btn label="选择元素" icon={<Pointer />} />
          <Sep />
          <Btn label="识别" icon={<Identify />} /><Btn label="超链接" icon={<Bolt />} disabled /><Btn label="HTML 弹出窗口" icon={<Popup />} disabled />
          <Sep />
          <Btn label="测量" icon={<Measure />} />
          <Sep />
          <Btn label="查找" icon={<Binoculars />} /><Btn label="查找路径" icon={<RouteFind />} /><Btn label="转到 XY" icon={<GoXY />} />
          <Sep />
          <Btn label="时间滑块" icon={<TimeIcon />} disabled />
          <Sep />
          <Btn label="查看器窗口" icon={<ViewerWin />} />
          <Overflow />
        </Bar>
        <Bar className="w-[548px]">
          <Grip /><TextBtn>编辑器(R)</TextBtn>
          <div className="ml-auto flex h-8 items-center gap-1 self-start"><Btn label="创建要素" icon={<FormEdit />} disabled /><Overflow /></div>
        </Bar>
        <Bar className="w-[491px]">
          <Grip /><Btn label="图斑" icon={<Ring />} disabled /><TextBtn>图斑分割</TextBtn>
          <Sep />
          <Btn label="面" icon={<GrayBlob />} disabled /><Btn label="框" icon={<Frame />} disabled /><Btn label="合并" icon={<Octagon />} disabled /><Btn label="融合" icon={<Octagon />} disabled />
          <Sep />
          <Btn label="切角" icon={<Tri />} disabled /><Btn label="切边" icon={<Tri dark />} disabled />
          <Sep />
          <Btn label="绘制" icon={<PenPoly />} disabled /><Btn label="修改" icon={<PenPoly />} disabled />
          <Sep />
          <Btn label="填充" icon={<GrayBlob />} disabled /><Btn label="旋转" icon={<Rotate />} disabled /><Btn label="环" icon={<DiamondRing />} /><Btn label="信息" icon={<InfoRing />} />
          <Overflow />
        </Bar>
      </div>
    </div>
  );
}

function Contents() {
  return (
    <aside className="flex w-[348px] shrink-0 flex-col bg-[#f0f0f0]">
      <PanelHead title="内容列表" />
      <div className="flex h-[33px] shrink-0 items-center bg-linear-to-b from-[#fbfbfb] to-[#f0f0f0] pl-1">
        <Btn label="按绘制顺序列出" icon={<ListOrder />} on /><Btn label="按源列出" icon={<ListSource />} /><Btn label="按可见性列出" icon={<ListVisible />} /><Btn label="按选择列出" icon={<ListSelect />} />
        <Sep /><Btn label="选项" icon={<Options />} />
      </div>
      <div className="flex min-h-0 flex-1 overflow-hidden border-2 border-[#a0a4ae] bg-white">
        <ul className="h-0 min-w-0 flex-1 text-black">
          <li className="flex h-[25px] items-center pl-[9px] font-bold"><Expander open /><span className="ml-2 mr-[6px]"><LayerStack /></span>图层</li>
          {layers.map((name, i) => (
            <li key={name}>
              <div className="flex h-[25px] items-center pl-[33px]">
                <Expander open />
                <label className="ml-[10px] flex items-center gap-2">
                  <span className="relative flex size-[14px]">
                    <input type="checkbox" defaultChecked className="peer size-[14px] appearance-none border-2 border-[#222] bg-white" />
                    <svg viewBox="0 0 14 14" className="pointer-events-none invisible absolute inset-0 size-[14px] peer-checked:visible" fill="none" aria-hidden="true"><path d="M3 6.500l3 3.500 5.500-6.500" stroke="#000" strokeWidth="2" /></svg>
                  </span>
                  <span className="h-[25px] w-[161px] whitespace-nowrap bg-[#0078d7] pl-[2px] text-[16px] leading-[23px] text-[#e6f2fc]">{name}</span>
                </label>
              </div>
              {i < layers.length - 1 && (
                <>
                  <p className="h-[25px] pl-[102px] leading-[23px]">RGB</p>
                  {bands.map(([c, b, bg, gap]) => (
                    <p key={b} className="flex h-[25px] items-center pl-[73px] leading-[23px]">
                      <i className={`mr-1 h-[14px] w-[19px] border border-[#777] ${bg}`} /><span className="pb-[2px]">{c}</span><span className={`pb-[2px] ${gap}`}>{b}</span>
                    </p>
                  ))}
                </>
              )}
            </li>
          ))}
        </ul>
        <div className="flex w-5 shrink-0 justify-center bg-[#f0f0f0] pt-[22px]"><span className="h-[79px] w-[2px] bg-[#858585]" /></div>
      </div>
    </aside>
  );
}

function MapImagery() {
  return (
    <svg viewBox="0 0 267 103" width="267" height="103" aria-hidden="true">
      <defs>
        <filter id="grain" x="0" y="0" width="100%" height="100%" colorInterpolationFilters="sRGB">
          <feTurbulence type="fractalNoise" baseFrequency="0.42" numOctaves="4" seed="7" result="n" />
          <feColorMatrix in="n" type="matrix" values="1.200 1.100 0 0 -.72  .9 1.300 .1 0 -.62  .5 .9 .9 0 -.69  0 0 0 0 1" result="c" />
          <feComposite in="c" in2="SourceGraphic" operator="in" />
        </filter>
        <linearGradient id="tone" x1="0" y1="0" x2="0" y2="1"><stop offset="0" stopColor="#7f6680" stopOpacity=".3" /><stop offset=".55" stopColor="#5f9376" stopOpacity=".28" /><stop offset="1" stopColor="#46956a" stopOpacity=".38" /></linearGradient>
      </defs>
      {["url(#grain)", undefined].map((f, i) => (
        <g key={i} filter={f} fill={i ? "url(#tone)" : "#567"}>
          <path d="M1 0h30l2 7 10 2 6 3 3 5-2 5-4 5-8 6-12 3-1 7-3 4-6 3-7 2-4 1-2-8-2-4-1-5 3-3 8-2-1-6 4-3-3-5 3-3-1-9-3 3-4 1-5-3z" />
          <path d="M49 0h218v102h-89V76H86l6-5 4-6 1-8-6-2-8 1v9l-2 5-5 4h-9l-6-4-3-5 1-5 5-5 2-8-1-14-3-10-5-8-4-8z" />
        </g>
      ))}
    </svg>
  );
}

function MapView() {
  return (
    <main className="flex min-w-0 flex-1 flex-col border-l-2 border-t-2 border-[#858585] bg-white">
      <div className="flex min-h-0 flex-1">
        <div className="relative min-w-0 flex-1 overflow-hidden bg-[#fefefe]">
          <div className="absolute left-[81px] top-[367px]"><MapImagery /></div>
        </div>
        <div className="flex w-[22px] shrink-0 justify-center border-l border-[#d8d8d8] bg-[#f0f0f0] pb-6 pt-[21px]"><span className="h-full w-[2px] bg-[#858585]" /></div>
      </div>
      <div className="flex h-[22px] shrink-0 items-center bg-[#f0f0f0] pb-px">
        <button type="button" aria-label="数据视图" className="flex h-5 w-[21px] items-center justify-center rounded bg-[#cfe6fa]"><S className="size-3"><rect x="1" y="1" width="18" height="18" fill="#b4c76a" stroke="#333" strokeWidth="2.500" /><path d="M4 14L14 4h3v6l-7 7z" fill="#f5f3c0" /></S></button>
        <button type="button" aria-label="布局视图" className="flex h-5 w-[22px] items-center justify-center"><S className="size-3"><path d="M3 1h10l5 5v13H3z" fill="#fff" stroke="#333" strokeWidth="2" /><path d="M6 9h9v6H6z" fill="#6f9cc0" stroke="#333" /></S></button>
        <Sep />
        <button type="button" aria-label="刷新" className="ml-1 flex w-[18px] justify-center"><S className="size-3"><path d="M3 8c2-7 11-7 14-1M17 12c-2 7-11 7-14 1" stroke="#20609a" strokeWidth="2.600" /><path d="M19 1v8h-8zM1 19v-8h8z" fill="#20609a" /></S></button>
        <button type="button" aria-label="暂停" className="flex w-[26px] justify-center gap-[3px]"><i className="h-[9px] w-[2px] bg-[#20609a]" /><i className="h-[9px] w-[2px] bg-[#20609a]" /></button>
        <span className="ml-[18px] mr-[45px] h-[2px] flex-1 bg-[#858585]" />
      </div>
    </main>
  );
}

function Attributes() {
  return (
    <aside className="flex w-[337px] shrink-0 flex-col">
      <PanelHead title="属性" />
      <div className="flex h-[33px] shrink-0 items-center bg-linear-to-b from-[#fbfbfb] to-[#f0f0f0] pl-[5px]">
        <button type="button" aria-label="分类" disabled className="flex h-7 w-7 items-center justify-center border border-[#a3b8ca] bg-[#dde8f2]"><CategoryIcon /></button>
        <Btn label="排序" icon={<SortAZ />} disabled /><Sep /><Btn label="关联" icon={<RelateIcon />} disabled /><Sep /><Btn label="选项" icon={<Options c="#b5b5b5" />} disabled /><span className="ml-1"><Caret gray /></span>
      </div>
      <div className="h-[170px] shrink-0 border border-[#949aa6] bg-[#f0f0f0]" />
      <div className="flex min-h-0 flex-1 flex-col bg-[#f0f0f0]">
        <div className="grid h-[17px] grid-cols-3 items-center">
          <span />
          <span className="h-px bg-[#a0a0a0]" />
          <span className="flex justify-end gap-px pr-[2px]">
            <button type="button" aria-label="折叠" className="flex size-[14px] items-center justify-center border border-black bg-white"><svg viewBox="0 0 8 10" className="h-[10px] w-2" fill="none"><path d="M1 4l3-3 3 3M1 8.500l3-3 3 3" stroke="#000" strokeWidth="1.400" /></svg></button>
            <button type="button" aria-label="分隔" className="flex size-[14px] items-center justify-center border border-black bg-white"><i className="h-2 w-px bg-black" /></button>
          </span>
        </div>
      </div>
      <div className="flex h-[25px] shrink-0 items-start bg-[#fafafa] pl-[3px]">
        <button type="button" className="flex h-6 items-center gap-1 rounded-b border border-t-0 border-[#9a9a9a] bg-white pl-[5px] pr-[5px]"><TabTable />属性</button>
        <button type="button" className="flex h-6 items-center gap-1 rounded-b border border-t-0 border-l-0 border-[#9a9a9a] bg-[#f3f3f3] pl-[5px] pr-[5px] text-[#777]"><TabEdit />创建要素</button>
      </div>
    </aside>
  );
}

function SideTabs() {
  return (
    <nav className="flex w-[21px] shrink-0 flex-col overflow-hidden bg-[#fbfbfb] pl-[2px] pt-[3px]">
      {[["目录", <CatalogWin />], ["搜索", <SearchWin />]].map(([t, ic]) => (
        <button key={t} type="button" className="flex h-[65px] w-[27px] shrink-0 flex-col items-start rounded-l-md border border-[#9a9a9a] bg-[#f3f3f3] pl-[2px] pt-[5px] text-[#666]">
          {ic}<span className="mt-1 w-5 leading-5 [text-orientation:sideways] [writing-mode:vertical-rl]">{t}</span>
        </button>
      ))}
    </nav>
  );
}

function ToolboxWindow() {
  return (
    <section className="absolute left-[703px] top-[56px] flex h-[853px] w-[465px] flex-col border-b-2 border-l-2 border-r-2 border-b-[#222] border-l-[#ececec] border-r-black bg-[#f4f4f4] px-[2px] pb-[3px] pt-[5px]">
      <header className="flex h-[27px] shrink-0 items-center bg-linear-to-r from-[#97b3d3] to-[#bad1ec] pb-[2px] pl-[5px] pr-[6px] text-[#1c1c1c]">
        <h2>ArcToolbox</h2>
        <button type="button" aria-label="最大化" className="ml-auto mr-[10px] size-[11px] border border-t-[3px] border-black" />
        <button type="button" aria-label="关闭"><CloseX /></button>
      </header>
      <div className="mt-[2px] flex min-h-0 flex-1 overflow-hidden border-2 border-[#8f949d] bg-white">
        <ul className="h-0 min-w-0 flex-1 text-black">
          {tree.map(([lvl, ic, text, open, sel], i) => (
            <li key={i} className={`flex h-[25px] items-center ${indent[lvl]}`}>
              {lvl === 2 && ic !== "set" ? <span className="w-[11px] shrink-0" /> : <Expander open={open} />}
              <span className="ml-[7px] mr-[3px]">{treeIcons[ic]}</span>
              <span className={`whitespace-nowrap px-[3px] pb-[2px] leading-[23px] ${sel ? "bg-[#0078d7] text-[#e6f2fc]" : ""}`}>{text}</span>
            </li>
          ))}
        </ul>
        <div className="flex w-5 shrink-0 justify-center bg-[#f0f0f0] pt-[220px]"><span className="h-[424px] w-[2px] bg-[#858585]" /></div>
      </div>
    </section>
  );
}

function ContextMenu() {
  return (
    <menu className="absolute left-[843px] top-[256px] w-[180px] border border-[#8a8a8a] bg-[#fcfcfc] bg-linear-to-r from-[#f8f8f8] via-[#eeeeee] via-[35px] to-[#fcfcfc] to-[35px] pb-[2px] pt-[2px] text-black shadow-[4px_4px_4px_rgba(0,0,0,0.35)]">
      {menuGroups.map((g, gi) => (
        <React.Fragment key={gi}>
          {gi > 0 && <li className="ml-[45px] flex h-[3px] items-center" role="separator"><span className="h-px w-full bg-[#b5b5b5]" /></li>}
          {g.map(([label, icon, disabled, hot]) => (
            <li key={label} className="px-px">
              <button type="button" disabled={disabled}
                className={`flex h-[29px] w-full items-center border pb-[2px] ${hot ? "border-[#1f86dd] bg-[#b3d7f3]" : "border-transparent"} ${disabled ? "text-[#a8a8a8]" : ""}`}>
                <span className="flex w-[43px] pl-[6px]">{icon}</span>{label}
              </button>
            </li>
          ))}
        </React.Fragment>
      ))}
    </menu>
  );
}

function Tooltip() {
  return (
    <div role="tooltip" className="absolute left-[1004px] top-[337px] h-[98px] w-[258px] rounded-[2px] border border-[#767676] bg-linear-to-b from-white to-[#c9d8ee] pl-[5px] pt-[5px] text-[#4c4c4c] shadow-[4px_4px_3px_rgba(0,0,0,0.4)]">
      <p className="font-bold leading-[26px]">批处理(B)</p>
      <p className="mt-[6px] pl-[10px] leading-[26px]">使用批处理格网打开当前所选工具<br />。</p>
    </div>
  );
}

export default function App() {
  return (
    <div className="relative flex h-screen flex-col overflow-hidden bg-linear-to-r from-[#f0f0f0] to-[#fbfbfb] font-['Noto_Sans_CJK_SC',sans-serif] text-[15px] leading-5 text-[#1a1a1a]">
      <TitleBar />
      <nav className="flex h-[35px] shrink-0 items-center pb-[2px] pl-1">
        {menus.map((m) => <button key={m} type="button" className="whitespace-nowrap px-[10px] text-[#222]">{m}</button>)}
      </nav>
      <Toolbars />
      <div className="flex min-h-0 flex-1 pb-[6px]">
        <Contents />
        <div className="w-[6px] shrink-0 bg-[#f0f0f0]" />
        <MapView />
        <div className="w-[6px] shrink-0 bg-[#fafafa]" />
        <Attributes />
        <SideTabs />
      </div>
      <ToolboxWindow />
      <ContextMenu />
      <Tooltip />
      <p className="absolute bottom-[5px] right-[10px] text-[13px] leading-5 text-[#8a8a8a]">CSDN @Lisme 丶</p>
    </div>
  );
}
